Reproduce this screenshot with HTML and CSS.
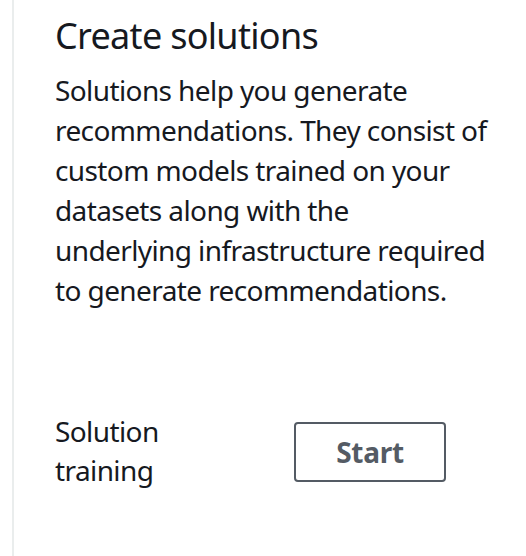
FILE: index.html
```html
<!DOCTYPE html>
<html>
<head>
<meta charset="utf-8">
<link rel="stylesheet" href="styles.css">
</head>
<body>
<div class="panel">
  <h2 class="title">Create solutions</h2>
  <p class="desc">Solutions help you generate<br>recommendations. They consist of<br>custom models trained on your<br>datasets along with the<br>underlying infrastructure required<br>to generate recommendations.</p>
  <div class="step">
    <div class="label">Solution training</div>
    <button class="btn">Start</button>
  </div>
</div>
</body>
</html>
```
FILE: styles.css
```css
html, body {
  margin: 0;
  padding: 0;
  background: #ffffff;
}
body {
  font-family: "Noto Sans", "Open Sans", sans-serif;
  color: #16191f;
  width: 526px;
  height: 556px;
  overflow: hidden;
}
.panel {
  margin-left: 12px;
  border-left: 2px solid #eaeded;
  height: 556px;
  padding: 14px 0 0 41px;
  box-sizing: border-box;
}
.title {
  margin: 0;
  font-size: 36px;
  font-weight: 400;
  line-height: 44px;
  letter-spacing: -0.7px;
}
.desc {
  margin: 12px 0 0;
  font-size: 28px;
  line-height: 40px;
  letter-spacing: -0.6px;
  white-space: nowrap;
}
.step {
  display: flex;
  align-items: flex-start;
  margin-top: 102px;
}
.label {
  width: 180px;
  font-size: 28px;
  line-height: 39px;
  letter-spacing: -0.6px;
}
.btn {
  margin-left: 59px;
  margin-top: 10px;
  width: 152px;
  height: 60px;
  border: 2px solid #545b64;
  border-radius: 4px;
  background: #ffffff;
  color: #545b64;
  font-family: inherit;
  font-size: 28px;
  font-weight: 700;
  letter-spacing: -0.3px;
  padding: 0;
}
```
